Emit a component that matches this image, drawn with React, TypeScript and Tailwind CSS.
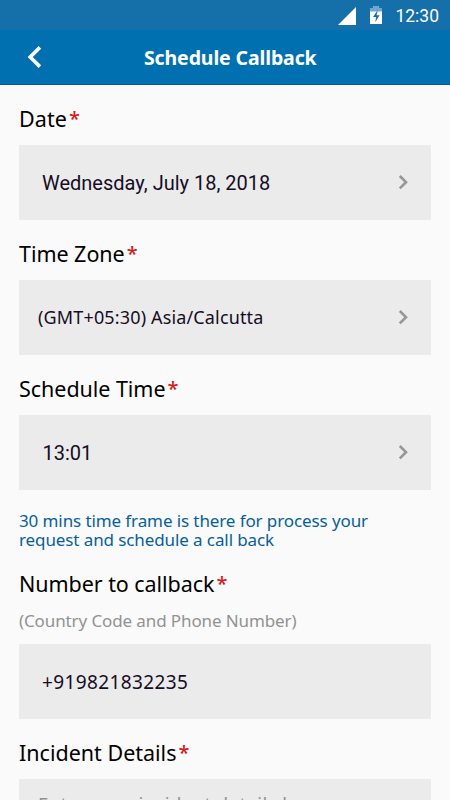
import type { ReactNode } from "react";

function Label({ children, className }: { children: ReactNode; className?: string }) {
  return (
    <h2 className="flex h-[30px] items-center whitespace-nowrap text-[21.5px] leading-[30px] text-black">
      <span className={className}>{children}</span>
      <span className="ml-[2px] text-[20px] font-medium text-[#d51a1a]">*</span>
    </h2>
  );
}

function Chevron() {
  return (
    <svg width="12" height="16" viewBox="0 0 12 16" fill="none" className="mb-[2px] shrink-0">
      <path d="M1.8 2 8 8.2 1.8 14.4" stroke="#969696" strokeWidth="2.6" />
    </svg>
  );
}

function Field({ children, className }: { children: ReactNode; className?: string }) {
  return (
    <button
      type="button"
      className={`flex h-[75px] w-full items-center justify-between bg-[#ebebeb] pr-[21px] text-left whitespace-nowrap text-[#160d25] ${className}`}
    >
      {children}
      <Chevron />
    </button>
  );
}

export default function App() {
  return (
    <div className="flex h-[800px] w-[450px] flex-col overflow-hidden bg-[#fafafa] font-['Noto_Sans',sans-serif]">
      <div className="flex h-[30px] shrink-0 items-center justify-end bg-[#1570aa] pr-[11px] text-white">
        <svg width="18" height="18" viewBox="0 0 18 18" fill="#fff" className="mt-[2px]">
          <path d="M0 18 18 0v18z" />
        </svg>
        <svg width="12" height="18" viewBox="0 0 12 18" className="ml-[14px]">
          <path d="M0 2h3V0h6v2h3v4H0z" fill="#70a9cd" />
          <path d="M0 5.5h12V18H0z" fill="#fff" />
          <path d="M7.8 4 3 11h3.2L5.2 16.3 9.6 9.3H6.6z" fill="#1570aa" />
        </svg>
        <span className="mt-[2px] ml-[13px] font-['Roboto',sans-serif] text-[17.5px] leading-[30px]">
          12:30
        </span>
      </div>

      <header className="flex h-[55px] shrink-0 items-center border-b border-[#075794] bg-[#0070b0] text-white">
        <svg width="16" height="22" viewBox="0 0 16 22" fill="none" className="ml-[27px]">
          <path d="M12.9 1.4 3.2 11l9.7 9.6" stroke="#fff" strokeWidth="3.6" />
        </svg>
        <h1 className="mt-[2px] ml-[101px] whitespace-nowrap text-[19.5px] font-bold tracking-[-0.12px]">
          Schedule Callback
        </h1>
      </header>

      <main className="flex flex-col px-[19px] pt-[19px]">
        <Label className="tracking-[0.1px]">Date</Label>
        <Field className="mt-[11px] pl-[23px] font-['Roboto',sans-serif] text-[20px]">
          Wednesday, July 18, 2018
        </Field>

        <div className="h-[19px]" />
        <Label className="tracking-[-0.04px]">Time Zone</Label>
        <Field className="mt-[11px] pl-[19px] text-[18px] tracking-[0.15px]">
          (GMT+05:30) Asia/Calcutta
        </Field>

        <div className="h-[19px]" />
        <Label className="tracking-[-0.04px]">Schedule Time</Label>
        <Field className="mt-[11px] pl-[23.5px] font-['Roboto',sans-serif] text-[20px]">13:01</Field>

        <p className="mt-[21px] whitespace-nowrap text-[17px] leading-[19px] tracking-[-0.1px] text-[#075f9b]">
          30 mins time frame is there for process your
          <br />
          request and schedule a call back
        </p>

        <div className="h-[20px]" />
        <Label className="tracking-[-0.06px]">Number to callback</Label>
        <p className="mt-[10px] h-[24px] whitespace-nowrap text-[17px] leading-[24px] tracking-[-0.11px] text-[#929292]">
          (Country Code and Phone Number)
        </p>
        <div className="mt-[11px] flex h-[75px] items-center bg-[#ebebeb] pt-[1px] pl-[23px] text-[19px] tracking-[0.38px] text-[#160d25]">
          +919821832235
        </div>

        <div className="h-[19px]" />
        <Label>Incident Details</Label>
        <div className="mt-[11px] h-[75px] bg-[#ebebeb] pt-[13px] pl-[19px] text-[18.5px] leading-[24px] tracking-[0.42px] whitespace-nowrap text-[#929292]">
          Enter your incident details here
        </div>
      </main>
    </div>
  );
}
